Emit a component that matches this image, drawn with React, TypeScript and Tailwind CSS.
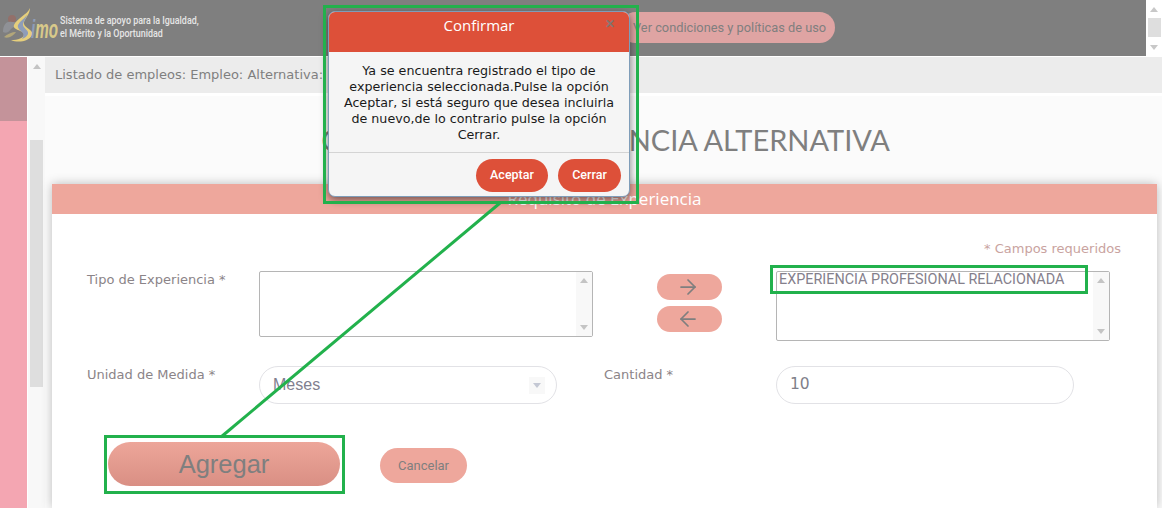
import { ArrowLeft, ArrowRight } from 'lucide-react'

const VERDANA = 'font-["DejaVu_Sans",sans-serif]'

function Logo() {
  return (
    <svg width="56" height="36" viewBox="0 0 56 36" className="shrink-0">
      <circle cx="10" cy="11" r="4" fill="#93706a" />
      <path d="M1 24c0-8 4-11 9-10 4 0 7 2 7 5-3-1-6 0-8 2-2 3-5 5-8 3z" fill="#8f9196" />
      <path d="M2 29c3-3 8-5 12-5-3 4-8 7-12 5z" fill="#b3a77a" />
      <path
        d="M28 0C25 7 15 10 12 17c-2 5 9 5 10 9 0 4-6 6-13 6 6 3 18 2 21-5 2-5-7-7-8-11-1-4 6-9 6-16z"
        fill="#e6cf7c"
      />
      <path d="M16 17c2-4 6-6 9-10-1 4-4 7-4 10 0 3 6 5 5 9-1 2-3 4-6 5 2-3 2-5 0-7-2-2-5-4-4-7z" fill="#8f9db8" />
      <text x="29" y="30" fontFamily="'Liberation Sans',sans-serif" fontStyle="italic" fontWeight="700" fontSize="25" textLength="27" lengthAdjust="spacingAndGlyphs">
        <tspan fill="#8f9db8">i</tspan>
        <tspan fill="#d8c98a">mo</tspan>
      </text>
    </svg>
  )
}

function ScrollArrows() {
  return (
    <div className="flex w-4 shrink-0 flex-col items-center bg-[#f8f8f8]">
      <span className="mt-[6px] h-0 w-0 border-x-[4px] border-b-[5px] border-x-transparent border-b-[#c4c4c4]" />
      <span className="mt-auto mb-[6px] h-0 w-0 border-x-[4px] border-t-[5px] border-x-transparent border-t-[#c4c4c4]" />
    </div>
  )
}

export default function App() {
  return (
    <div className={`relative flex h-[508px] w-[1162px] flex-col overflow-hidden bg-white ${VERDANA}`}>
      {/* Header */}
      <header className="flex h-[56px] shrink-0 items-center bg-[#7f7f7f]">
        <div className="ml-[2px] mt-[-4px]">
          <Logo />
        </div>
        <p className='ml-[2px] mt-[-2px] w-[170px] origin-left scale-x-[0.81] font-["Roboto",sans-serif] text-[11px] font-medium leading-[13px] text-[#e6e6e6] whitespace-nowrap'>
          Sistema de apoyo para la Igualdad,
          <br />
          el Mérito y la Oportunidad
        </p>
        <div className='ml-[390px] mt-[-1px] flex h-[31px] w-[215px] items-center rounded-full bg-[#dfa4a3] pl-[13px] font-["Roboto",sans-serif] text-[12.8px] whitespace-nowrap text-[#7f7f7f]'>
          Ver condiciones y políticas de uso
        </div>
        <div className="ml-auto flex h-[56px] w-4 flex-col items-center bg-white">
          <span className="mt-[7px] h-0 w-0 border-x-[4px] border-b-[5px] border-x-transparent border-b-[#c8c8c8]" />
          <span className="mt-[6px] h-[19px] w-[13px] bg-[#dedede]" />
          <span className="mt-auto mb-[6px] h-0 w-0 border-x-[4px] border-t-[5px] border-x-transparent border-t-[#c8c8c8]" />
        </div>
      </header>

      <div className="mt-[1px] flex min-h-0 flex-1">
        {/* Side band */}
        <aside className="flex w-[27px] shrink-0 flex-col bg-[#f4a6b2]">
          <div className="h-[64px] bg-[#c4939a]" />
        </aside>

        {/* Side scrollbar */}
        <div className="ml-[1px] flex w-[17px] shrink-0 flex-col items-center bg-[#f8f8f8]">
          <span className="mt-[7px] h-0 w-0 border-x-[4px] border-b-[5px] border-x-transparent border-b-[#c4c4c4]" />
          <span className="mt-[71px] h-[247px] w-[13px] bg-[#dedede]" />
        </div>

        <main className="flex min-w-0 flex-1 flex-col bg-[#fbfbfb]">
          <div className="flex h-[36px] shrink-0 items-center bg-[#ececec] pl-[10px] text-[13px] text-[#7f7f7f]">
            Listado de empleos: Empleo: Alternativa:
          </div>
          <div className="h-[3px] shrink-0 bg-white" />

          <h1 className='mt-[30px] h-[28px] pr-[272px] text-right font-["Lato",sans-serif] text-[29px] leading-[28px] whitespace-nowrap text-[#7f7f7f]'>
            CONFIGURAR EXPERIENCIA ALTERNATIVA
          </h1>

          {/* Card */}
          <section className="mt-[30px] ml-[7px] mr-[5px] min-h-0 flex-1 bg-white shadow-[0_0_10px_rgba(0,0,0,0.26)]">
            <div className='flex h-[30px] items-center justify-center bg-[#eea79c] font-["Open_Sans",sans-serif] text-[17px] text-white'>
              Requisito de Experiencia
            </div>

            <div className="pl-[35px] pr-[36px]">
              <p className="mt-[27px] text-right text-[13px] leading-[16px] text-[#c9a3a0]">* Campos requeridos</p>

              <div className="mt-[14px] flex items-start">
                <label className="mt-[1px] w-[172px] shrink-0 text-[13px] leading-[16px] text-[#8b8488]">Tipo de Experiencia *</label>
                <div className="flex h-[66px] w-[334px] shrink-0 rounded-[2px] border border-[#b5b5b5] bg-white">
                  <div className="flex-1" />
                  <ScrollArrows />
                </div>
                <div className="ml-[64px] mt-[3px] flex flex-col gap-[6px]">
                  <button className="flex h-[26px] w-[65px] items-center justify-center rounded-full bg-[#eea79c] pr-[4px] text-[#7f7f7f]">
                    <ArrowRight size={24} strokeWidth={1.75} />
                  </button>
                  <button className="flex h-[26px] w-[65px] items-center justify-center rounded-full bg-[#eea79c] pr-[4px] text-[#7f7f7f]">
                    <ArrowLeft size={24} strokeWidth={1.75} />
                  </button>
                </div>
                <div className="ml-[54px] flex h-[70px] w-[334px] shrink-0 rounded-[2px] border border-[#b5b5b5] bg-white">
                  <div className='flex-1 pl-[2px] pt-[1px] font-["Roboto",sans-serif] text-[14.4px] leading-[14px] whitespace-nowrap text-[#85808c]'>
                    EXPERIENCIA PROFESIONAL RELACIONADA
                  </div>
                  <ScrollArrows />
                </div>
              </div>

              <div className="mt-[25px] flex items-start">
                <label className="mt-[1px] w-[172px] shrink-0 text-[13px] leading-[16px] text-[#8b8488]">Unidad de Medida *</label>
                <div className="flex h-[38px] w-[298px] shrink-0 items-center rounded-full border border-[#e2e2e6] bg-white pl-[13px] pr-[11px] text-[16px] text-[#80808f]">
                  <span className='flex-1 font-["Liberation_Sans",sans-serif]'>Meses</span>
                  <span className="flex h-[17px] w-[16px] items-center justify-center bg-[#f8f8f8]">
                    <span className="h-0 w-0 border-x-[4px] border-t-[5px] border-x-transparent border-t-[#c4c8d4]" />
                  </span>
                </div>
                <label className="mt-[1px] ml-[47px] w-[125px] shrink-0 text-[13px] leading-[16px] text-[#8b8488]">Cantidad *</label>
                <div className="ml-[47px] flex h-[38px] w-[298px] shrink-0 items-center rounded-full border border-[#e2e2e6] bg-white pl-[13px] text-[15.5px] text-[#7f7f8a]">
                  10
                </div>
              </div>

              <div className='mt-[38px] ml-[21px] flex items-start font-["Liberation_Sans",sans-serif]'>
                <button className="h-[44px] w-[232px] rounded-full bg-gradient-to-b from-[#eda69a] to-[#d98f84] text-[25.5px] text-[#7f7f7f]">
                  Agregar
                </button>
                <button className='ml-[40px] mt-[6px] h-[35px] w-[87px] rounded-full bg-[#eea79c] font-["Roboto",sans-serif] text-[13px] text-[#7f7f7f]'>
                  Cancelar
                </button>
              </div>
            </div>
          </section>
        </main>
      </div>

      {/* Dialog */}
      <div className="absolute left-[328px] top-[11px] flex h-[186px] w-[302px] flex-col overflow-hidden rounded-[7px] border border-[#7f9db9] bg-[#f5f5f5] shadow-[0_3px_9px_rgba(0,0,0,0.5)]">
        <div className='relative flex h-[40px] shrink-0 items-center justify-center bg-[#dd5039] pb-[14px] font-["Open_Sans",sans-serif] text-[15px] text-white'>
          Confirmar
          <span className="absolute right-[14px] top-[3px] text-[12px] font-bold text-[#857571]">✕</span>
        </div>
        <div className="flex h-[101px] shrink-0 items-start justify-center border-b border-[#d4d4d4] px-[10px] pt-[11px] text-center text-[12.7px] leading-[16px] text-[#1a1a1a]">
          <p>
            Ya se encuentra registrado el tipo de experiencia seleccionada.Pulse la opción Aceptar, si está seguro que desea incluirla de nuevo,de lo contrario pulse la opción Cerrar.
          </p>
        </div>
        <div className='mt-[6px] flex justify-end gap-[10px] pr-[8px] font-["Roboto",sans-serif] text-[12.5px] font-medium text-white'>
          <button className="h-[33px] w-[72px] rounded-full bg-[#dd5039]">Aceptar</button>
          <button className="h-[33px] w-[63px] rounded-full bg-[#dd5039]">Cerrar</button>
        </div>
      </div>

      {/* Green annotations */}
      <div className="pointer-events-none absolute left-[323px] top-[5px] h-[199px] w-[316px] border-[3px] border-[#22b14c]" />
      <div className="pointer-events-none absolute left-[104px] top-[435px] h-[59px] w-[241px] border-[3px] border-[#22b14c]" />
      <div className="pointer-events-none absolute left-[770px] top-[265px] h-[29px] w-[318px] border-[3px] border-[#22b14c]" />
      <svg className="pointer-events-none absolute left-0 top-0" width="1162" height="508">
        <line x1="500" y1="203" x2="221" y2="437" stroke="#22b14c" strokeWidth="3" />
      </svg>
    </div>
  )
}
